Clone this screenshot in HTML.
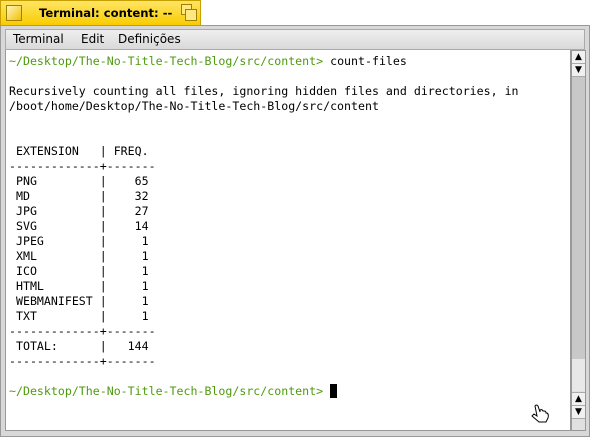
<!DOCTYPE html>
<html><head><style>
body{margin:0;width:590px;height:437px;background:#fff;position:relative;overflow:hidden;font-family:"DejaVu Sans","Liberation Sans",sans-serif}
.tab{position:absolute;left:0;top:0;width:201px;height:25px;background:linear-gradient(#ffe566,#f9cc00);border:1px solid #c8a000;border-bottom:none;box-sizing:border-box}
.tab .t{position:absolute;left:38px;top:5px;font-size:11.6px;font-weight:bold;color:#000}
.cb{position:absolute;left:5px;top:4px;width:14px;height:14px;border:1px solid #a08000;background:linear-gradient(135deg,#fff6c0,#f0c000)}
.zb1{position:absolute;left:180px;top:3px;width:9px;height:9px;border:1px solid #a08000;background:#ffe880}
.zb2{position:absolute;left:184px;top:8px;width:10px;height:10px;border:1px solid #a08000;background:#ffe880}
.frame{position:absolute;left:0;top:25px;width:590px;height:412px;background:#d8d8d8;border:1px solid #999;box-sizing:border-box}
.menu{position:absolute;left:5px;top:29px;width:580px;height:21px;background:linear-gradient(#efefef,#d9d9d9);border:1px solid #aaa;box-sizing:border-box;font-size:12px}
.menu span{position:absolute;top:2px}
.txt{position:absolute;left:5px;top:50px;width:566px;height:381px;background:#fff;border:1px solid #999;border-top:none;box-sizing:border-box}
pre{margin:0;position:absolute;left:3px;top:4px;font-family:"DejaVu Sans Mono","Liberation Mono",monospace;font-size:11.6px;line-height:15px;color:#000}
.g{color:#4f9a10}
.sb{position:absolute;left:571px;top:50px;width:15px;height:381px;background:#e0e0e0;border:1px solid #999;box-sizing:border-box}
.ar{position:absolute;left:0;width:13px;height:12px;background:#f0f0f0;border-bottom:1px solid #aaa;font-size:9px;text-align:center;line-height:12px}
.thumb{position:absolute;left:0;top:26px;width:13px;height:282px;background:#c8c8c8;border-bottom:1px solid #999}
.cur{display:inline-block;width:7px;height:14px;background:#000;vertical-align:-3px}
</style></head><body>
<div class="frame"></div>
<div class="tab"><div class="cb"></div><div class="t">Terminal: content: --</div><div class="zb1"></div><div class="zb2"></div></div>
<div class="menu"><span style="left:7px">Terminal</span><span style="left:75px">Edit</span><span style="left:112px">Definições</span></div>
<div class="txt"><pre><span class="g">~/Desktop/The-No-Title-Tech-Blog/src/content&gt;</span> count-files

Recursively counting all files, ignoring hidden files and directories, in
/boot/home/Desktop/The-No-Title-Tech-Blog/src/content


 EXTENSION   | FREQ.
-------------+-------
 PNG         |    65
 MD          |    32
 JPG         |    27
 SVG         |    14
 JPEG        |     1
 XML         |     1
 ICO         |     1
 HTML        |     1
 WEBMANIFEST |     1
 TXT         |     1
-------------+-------
 TOTAL:      |   144
-------------+-------

<span class="g">~/Desktop/The-No-Title-Tech-Blog/src/content&gt;</span> <span class="cur"></span></pre>
<svg style="position:absolute;left:524px;top:352px" width="20" height="22" viewBox="0 0 20 22"><path d="M2 14 L4 12 L7 14 L5 4 Q6 2 8 4 L10 10 L10 8 Q12 7 13 9 L14 9 Q16 9 16 11 L17 11 Q19 12 18 16 L16 20 L9 20 Z" fill="#fff" stroke="#000" stroke-width="1"/></svg></div>
<div class="sb">
<div class="ar" style="top:0">▲</div><div class="ar" style="top:13px">▼</div>
<div class="thumb"></div>
<div style="position:absolute;top:308px;left:0;width:13px;height:32px;background:#e8e8e8"></div>
<div class="ar" style="top:341px;border-top:1px solid #aaa">▲</div><div class="ar" style="top:355px">▼</div>
</div>
</body></html>
